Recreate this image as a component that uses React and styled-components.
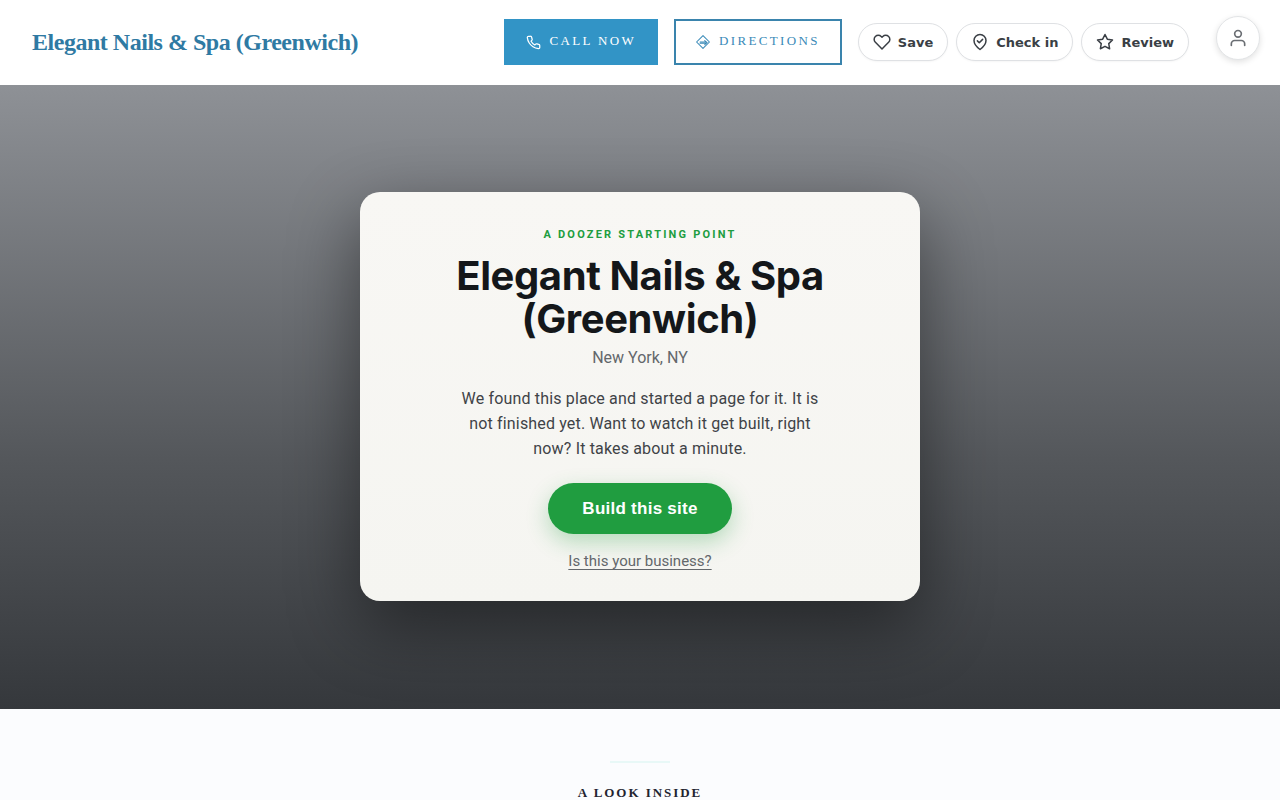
import React from 'react';
import styled, { createGlobalStyle } from 'styled-components';

const GlobalStyle = createGlobalStyle`
  *, *::before, *::after { box-sizing: border-box; }
  body {
    margin: 0;
    background: #fbfcfe;
    color: #1f2430;
    font-family: "Liberation Serif", serif;
  }
`;

const Header = styled.header`
  display: flex;
  align-items: center;
  justify-content: space-between;
  min-height: 85px;
  padding: 19px 91px 20px 32px;
  background: #fff;
`;

const Brand = styled.a`
  color: #2f7aa3;
  font-size: 24px;
  font-weight: 700;
  line-height: 28px;
  letter-spacing: -0.02em;
  text-decoration: none;
`;

const Actions = styled.nav`
  display: flex;
  align-items: center;
  gap: 16px;
`;

const ActionLink = styled.a`
  display: inline-flex;
  align-items: center;
  gap: 9px;
  height: 46px;
  padding: 0 20px;
  border: 2px solid ${(p) => (p.$filled ? '#3294c6' : '#3a84ad')};
  background: ${(p) => (p.$filled ? '#3294c6' : 'transparent')};
  color: ${(p) => (p.$filled ? '#fff' : '#3a8ab8')};
  font-size: 13px;
  line-height: 20px;
  letter-spacing: 0.18em;
  text-transform: uppercase;
  text-decoration: none;
`;

const ActionText = styled.span`
  padding-bottom: 2px;
`;

const PillGroup = styled.div`
  display: flex;
  gap: 8px;
`;

const Pill = styled.button`
  display: inline-flex;
  align-items: center;
  gap: 7px;
  height: 38px;
  padding: 0 14px;
  border: 1px solid #dfe1e4;
  border-radius: 19px;
  background: #fff;
  box-shadow: 0 1px 2px rgba(0, 0, 0, 0.04);
  color: #3a3f45;
  font-family: "DejaVu Sans", sans-serif;
  font-size: 13px;
  font-weight: 700;
  cursor: pointer;
`;

const AccountButton = styled.button`
  position: fixed;
  top: 16px;
  right: 20px;
  display: grid;
  place-items: center;
  width: 44px;
  height: 44px;
  padding: 0;
  border: 1px solid #e2e4e6;
  border-radius: 50%;
  background: #fff;
  box-shadow: 0 2px 6px rgba(0, 0, 0, 0.12);
  color: #6a6e73;
  cursor: pointer;
`;

const Hero = styled.section`
  display: flex;
  align-items: center;
  justify-content: center;
  min-height: 624px;
  padding: 107px 24px 108px;
  background: linear-gradient(180deg, #8e9196 0%, #54575b 60%, #35383c 100%);
`;

const Card = styled.div`
  display: flex;
  flex-direction: column;
  align-items: center;
  width: 100%;
  max-width: 560px;
  padding: 36px 32px 31px;
  border-radius: 20px;
  background: linear-gradient(180deg, #f8f7f4, #f5f5f1);
  box-shadow: 0 24px 70px rgba(0, 0, 0, 0.45);
  font-family: Roboto, sans-serif;
  text-align: center;
`;

const Eyebrow = styled.p`
  margin: 0 0 12px;
  color: #209d40;
  font-size: 11px;
  font-weight: 700;
  line-height: 14px;
  letter-spacing: 0.2em;
  text-transform: uppercase;
`;

const Title = styled.h1`
  max-width: 440px;
  margin: 0 0 8px;
  color: #14171a;
  font-family: Inter, sans-serif;
  font-size: 40px;
  font-weight: 700;
  line-height: 43px;
  letter-spacing: -0.01em;
`;

const Place = styled.p`
  margin: 0 0 18px;
  color: #63676b;
  font-size: 16px;
  line-height: 20px;
`;

const Message = styled.p`
  max-width: 380px;
  margin: 0 0 22px;
  color: #3f4347;
  font-size: 16px;
  line-height: 25px;
  letter-spacing: 0.01em;
`;

const BuildButton = styled.button`
  height: 51px;
  margin-bottom: 18px;
  padding: 0 34px;
  border: 0;
  border-radius: 26px;
  background: #209d40;
  box-shadow: 0 8px 22px rgba(32, 157, 64, 0.3);
  color: #fff;
  font-family: "Liberation Sans", sans-serif;
  font-size: 17px;
  font-weight: 700;
  letter-spacing: 0.015em;
  cursor: pointer;
`;

const ClaimLink = styled.a`
  color: #63676b;
  font-size: 15px;
  line-height: 18px;
  text-decoration: underline;
  text-underline-offset: 3px;
`;

const Inside = styled.section`
  display: flex;
  flex-direction: column;
  align-items: center;
  gap: 21px;
  padding: 52px 24px;
`;

const Rule = styled.hr`
  width: 60px;
  height: 2px;
  margin: 0;
  border: 0;
  background: #e8f8f7;
`;

const InsideTitle = styled.h2`
  margin: 0;
  font-size: 13px;
  font-weight: 700;
  line-height: 18px;
  letter-spacing: 0.15em;
  text-transform: uppercase;
`;

const Stroke = ({ size, width = 2, children }) => (
  <svg
    width={size}
    height={size}
    viewBox="0 0 24 24"
    fill="none"
    stroke="currentColor"
    strokeWidth={width}
    strokeLinecap="round"
    strokeLinejoin="round"
    aria-hidden="true"
  >
    {children}
  </svg>
);

const PhoneIcon = () => (
  <Stroke size={15}>
    <path d="M22 16.92v3a2 2 0 0 1-2.18 2 19.79 19.79 0 0 1-8.63-3.07 19.5 19.5 0 0 1-6-6 19.79 19.79 0 0 1-3.07-8.67A2 2 0 0 1 4.11 2h3a2 2 0 0 1 2 1.72 12.84 12.84 0 0 0 .7 2.81 2 2 0 0 1-.45 2.11L8.09 9.91a16 16 0 0 0 6 6l1.27-1.27a2 2 0 0 1 2.11-.45 12.84 12.84 0 0 0 2.81.7A2 2 0 0 1 22 16.92z" />
  </Stroke>
);

const DirectionsIcon = () => (
  <Stroke size={14} width={1.8}>
    <path d="M12 1 23 12 12 23 1 12Z" />
    <path d="M7 12h11M7 14h10M15 9.5l4 3.5-4 3.5" />
  </Stroke>
);

const HeartIcon = () => (
  <Stroke size={18}>
    <path d="M20.84 4.61a5.5 5.5 0 0 0-7.78 0L12 5.67l-1.06-1.06a5.5 5.5 0 0 0-7.78 7.78l1.06 1.06L12 21.23l7.78-7.78 1.06-1.06a5.5 5.5 0 0 0 0-7.78z" />
  </Stroke>
);

const CheckInIcon = () => (
  <Stroke size={18}>
    <path d="M12 22s8-6 8-12a8 8 0 1 0-16 0c0 6 8 12 8 12z" />
    <path d="m8.5 10.5 2.5 2.5 4.5-4.5" />
  </Stroke>
);

const StarIcon = () => (
  <Stroke size={18}>
    <path d="m12 2 3.09 6.26L22 9.27l-5 4.87 1.18 6.88L12 17.77l-6.18 3.25L7 14.14 2 9.27l6.91-1.01z" />
  </Stroke>
);

const UserIcon = () => (
  <Stroke size={20}>
    <path d="M20 21v-2a4 4 0 0 0-4-4H8a4 4 0 0 0-4 4v2" />
    <circle cx="12" cy="7" r="4" />
  </Stroke>
);

export default function App() {
  return (
    <>
      <GlobalStyle />
      <Header>
        <Brand href="#top">Elegant Nails &amp; Spa (Greenwich)</Brand>
        <Actions aria-label="Business actions">
          <ActionLink href="#call" $filled>
            <PhoneIcon />
            <ActionText>Call Now</ActionText>
          </ActionLink>
          <ActionLink href="#directions">
            <DirectionsIcon />
            <ActionText>Directions</ActionText>
          </ActionLink>
          <PillGroup>
            <Pill type="button"><HeartIcon />Save</Pill>
            <Pill type="button"><CheckInIcon />Check in</Pill>
            <Pill type="button"><StarIcon />Review</Pill>
          </PillGroup>
        </Actions>
        <AccountButton type="button" aria-label="Account"><UserIcon /></AccountButton>
      </Header>
      <main>
        <Hero>
          <Card>
            <Eyebrow>A Doozer starting point</Eyebrow>
            <Title>Elegant Nails &amp; Spa (Greenwich)</Title>
            <Place>New York, NY</Place>
            <Message>
              We found this place and started a page for it. It is not finished
              yet. Want to watch it get built, right now? It takes about a minute.
            </Message>
            <BuildButton type="button">Build this site</BuildButton>
            <ClaimLink href="#claim">Is this your business?</ClaimLink>
          </Card>
        </Hero>
        <Inside>
          <Rule />
          <InsideTitle>A look inside</InsideTitle>
        </Inside>
      </main>
    </>
  );
}
